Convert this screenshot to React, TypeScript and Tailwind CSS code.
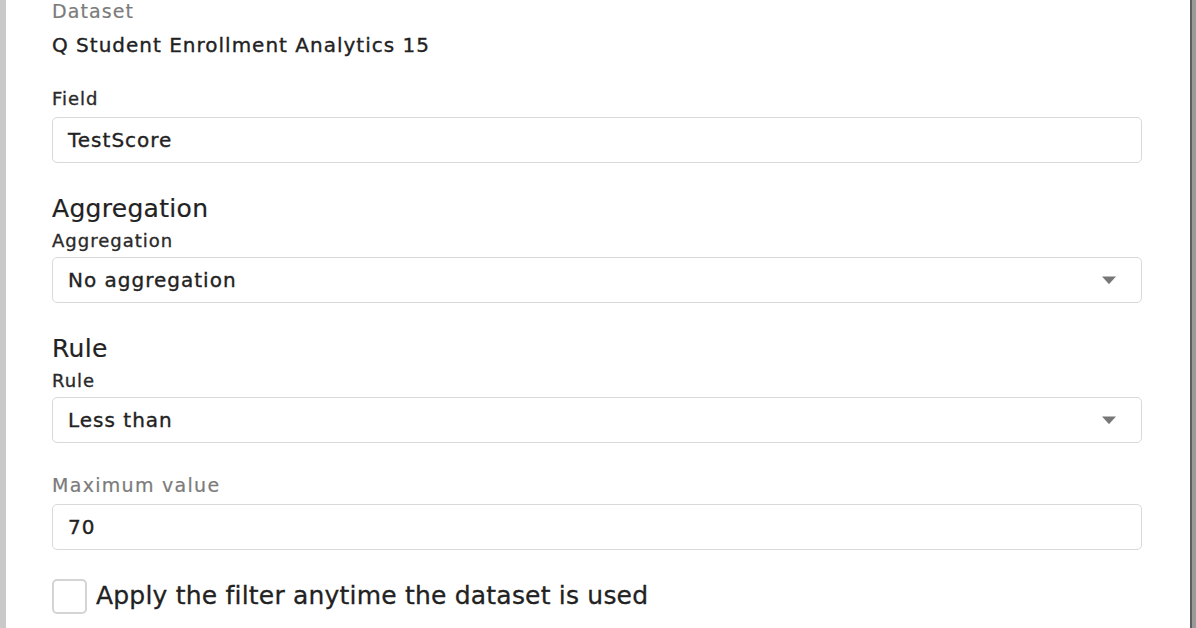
import React from 'react';

const font = { fontFamily: '"DejaVu Sans", "Liberation Sans", sans-serif' };

function Caret() {
  return (
    <svg width="16" height="10" viewBox="0 0 16 10" className="shrink-0">
      <path d="M1 1.5 H15 L8.6 8.6 Q8 9.2 7.4 8.6 Z" fill="#777" />
    </svg>
  );
}

function TextBox({ value }: { value: string }) {
  return (
    <div className="h-[46px] w-full rounded-[5px] border border-[#d9d9d9] bg-white px-[15px] flex items-center text-[20px] tracking-[1px] text-[#222] [-webkit-text-stroke:0.35px_#222]">
      {value}
    </div>
  );
}

function SelectBox({ value }: { value: string }) {
  return (
    <div className="h-[46px] w-full rounded-[5px] border border-[#d9d9d9] bg-white pl-[15px] pr-[24px] flex items-center justify-between text-[20px] tracking-[1px] text-[#222] [-webkit-text-stroke:0.35px_#222]">
      <span>{value}</span>
      <Caret />
    </div>
  );
}

function Label({ children }: { children: React.ReactNode }) {
  return (
    <div className="text-[18px] leading-[28px] tracking-[1px] text-[#2a2a2a] [-webkit-text-stroke:0.35px_#2a2a2a]">
      {children}
    </div>
  );
}

function Heading({ children }: { children: React.ReactNode }) {
  return (
    <div className="text-[25px] leading-[36px] tracking-[0.3px] text-[#222] [-webkit-text-stroke:0.2px_#222]">
      {children}
    </div>
  );
}

export default function App() {
  return (
    <div className="w-[1196px] h-[628px] overflow-hidden flex bg-white" style={font}>
      {/* left edge of the underlying page */}
      <div className="w-[6px] bg-[#c9c9c9]" />

      <div className="flex-1 pl-[46px] pr-[48px] -mt-[5px]">
        <div className="text-[19px] leading-[32px] tracking-[1.1px] text-[#7b7b7b] [-webkit-text-stroke:0.2px_#7b7b7b]">
          Dataset
        </div>
        <div className="text-[20px] leading-[36px] tracking-[1px] text-[#222] [-webkit-text-stroke:0.35px_#222]">
          Q Student Enrollment Analytics 15
        </div>

        <div className="mt-[22px]">
          <Label>Field</Label>
        </div>
        <div className="mt-[4px]">
          <TextBox value="TestScore" />
        </div>

        <div className="mt-[28px]">
          <Heading>Aggregation</Heading>
        </div>
        <Label>Aggregation</Label>
        <div className="mt-[2px]">
          <SelectBox value="No aggregation" />
        </div>

        <div className="mt-[28px]">
          <Heading>Rule</Heading>
        </div>
        <Label>Rule</Label>
        <div className="mt-[2px]">
          <SelectBox value="Less than" />
        </div>

        <div className="mt-[27px] text-[19px] leading-[30px] tracking-[1.3px] text-[#7b7b7b] [-webkit-text-stroke:0.2px_#7b7b7b]">
          Maximum value
        </div>
        <div className="mt-[4px]">
          <TextBox value="70" />
        </div>

        <div className="mt-[28px] flex items-center gap-[9px]">
          <div className="w-[35px] h-[35px] rounded-[5px] border-2 border-[#d4d4d4] bg-white" />
          <span className="text-[25px] leading-[36px] tracking-[0.2px] text-[#222] [-webkit-text-stroke:0.3px_#222]">
            Apply the filter anytime the dataset is used
          </span>
        </div>
      </div>

      {/* right edge of the dialog */}
      <div className="w-[6px] flex">
        <div className="w-[2px] bg-[#5e5e5e]" />
        <div className="flex-1 bg-[#9a9a9a]" />
      </div>
    </div>
  );
}
